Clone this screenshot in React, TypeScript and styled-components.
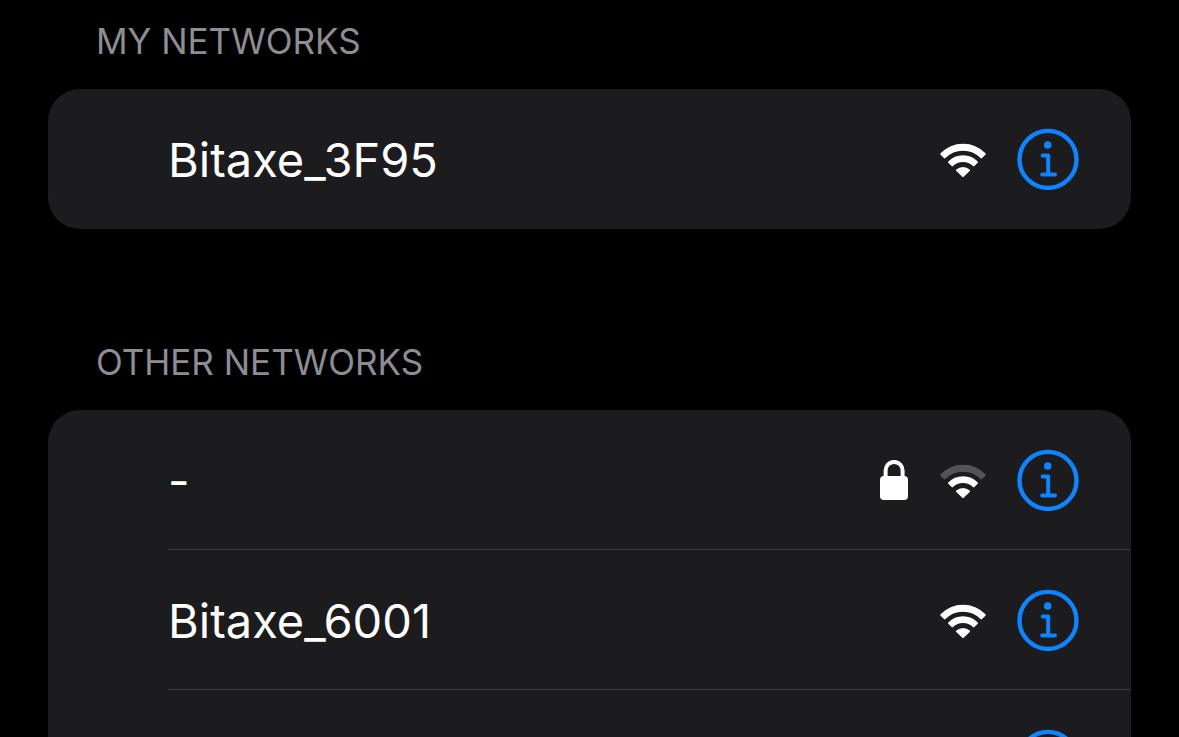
import React from 'react';
import styled, { createGlobalStyle } from 'styled-components';

const GlobalStyle = createGlobalStyle`
  * {
    box-sizing: border-box;
  }

  body {
    margin: 0;
    background: #000;
    color: #fff;
    font-family: Inter, Roboto, 'Liberation Sans', sans-serif;
  }
`;

const Screen = styled.main`
  display: flex;
  flex-direction: column;
  gap: 111px;
  height: 100vh;
  padding: 19px 48px 0;
  overflow: hidden;
`;

const Section = styled.section`
  flex: none;
`;

const SectionTitle = styled.h2`
  margin: 0;
  padding: 0 48px 26px;
  color: #8d8d93;
  font-size: 35px;
  font-weight: 400;
  line-height: 44px;
  text-transform: uppercase;
`;

const NetworkList = styled.ul`
  margin: 0;
  padding: 0 0 0 120px;
  list-style: none;
  background: #1c1c1e;
  border-radius: 32px;
`;

const NetworkRow = styled.li`
  display: flex;
  align-items: center;
  gap: 31px;
  height: 140px;
  padding-right: 52px;

  &:not(:last-child) {
    box-shadow: inset 0 -1px #3d3d41;
  }
`;

const NetworkButton = styled.button`
  display: flex;
  flex: 1;
  align-items: center;
  gap: 32px;
  height: 100%;
  min-width: 0;
  padding: 0;
  border: 0;
  background: none;
  color: inherit;
  font: inherit;
  text-align: left;
  cursor: pointer;
`;

const NetworkName = styled.span`
  flex: 1;
  padding-top: 2px;
  font-size: 47px;
  line-height: 60px;
`;

const InfoButton = styled.button`
  display: flex;
  padding: 0;
  border: 0;
  border-radius: 50%;
  background: none;
  color: #0f84fe;
  cursor: pointer;
`;

const Glyph = styled.svg`
  display: block;
  flex: none;
`;

const SignalBand = styled.path<{ $active: boolean }>`
  fill: ${({ $active }) => ($active ? '#fff' : '#545456')};
  stroke: ${({ $active }) => ($active ? '#fff' : '#545456')};
  stroke-width: 2px;
  stroke-linejoin: round;
`;

function WifiIcon({ strength }: { strength: number }) {
  return (
    <Glyph width="46" height="36" viewBox="0 -2 46 36" aria-hidden="true">
      <SignalBand
        $active={strength >= 3}
        d="M1.3 11A30 30 0 0 1 44.7 11L41.3 14.4A25.5 25.5 0 0 0 4.7 14.4Z"
      />
      <SignalBand
        $active={strength >= 2}
        d="M9 19.1A19.5 19.5 0 0 1 37 19.1L33.7 22.4A15.5 15.5 0 0 0 12.3 22.4Z"
      />
      <SignalBand
        $active={strength >= 1}
        d="M17 27.2A9 9 0 0 1 29 27.2L23 33Z"
      />
    </Glyph>
  );
}

function LockIcon() {
  return (
    <Glyph width="28" height="40" viewBox="0 0 28 40" aria-hidden="true">
      <rect y="16" width="28" height="24" rx="3.8" fill="#fff" />
      <path
        d="M5.6 18V10.4a8.5 8.5 0 0 1 17 0V18"
        fill="none"
        stroke="#fff"
        strokeWidth="4"
      />
    </Glyph>
  );
}

function InfoIcon() {
  return (
    <Glyph
      width="62"
      height="62"
      viewBox="0 0 62 62"
      fill="none"
      stroke="currentColor"
      aria-hidden="true"
    >
      <circle cx="31" cy="31.4" r="28.5" strokeWidth="4.4" />
      <circle cx="30.7" cy="17" r="3.8" fill="currentColor" stroke="none" />
      <path
        d="M25.7 27.4H31.2V46.4M25.2 46.4H38"
        strokeWidth="4"
        strokeLinecap="round"
        strokeLinejoin="round"
      />
    </Glyph>
  );
}

interface Network {
  id: string;
  name: string;
  strength: number;
  secured?: boolean;
}

const myNetworks: Network[] = [{ id: 'a', name: 'Bitaxe_3F95', strength: 3 }];

const otherNetworks: Network[] = [
  { id: 'b', name: '-', strength: 2, secured: true },
  { id: 'c', name: 'Bitaxe_6001', strength: 3 },
  { id: 'd', name: '', strength: 3 },
];

function NetworkSection({ title, networks }: { title: string; networks: Network[] }) {
  return (
    <Section>
      <SectionTitle>{title}</SectionTitle>
      <NetworkList>
        {networks.map(({ id, name, strength, secured }) => (
          <NetworkRow key={id}>
            <NetworkButton type="button" aria-label={name || 'Unnamed network'}>
              <NetworkName>{name}</NetworkName>
              {secured && <LockIcon />}
              <WifiIcon strength={strength} />
            </NetworkButton>
            <InfoButton type="button" aria-label="Network details">
              <InfoIcon />
            </InfoButton>
          </NetworkRow>
        ))}
      </NetworkList>
    </Section>
  );
}

export default function App() {
  return (
    <>
      <GlobalStyle />
      <Screen>
        <NetworkSection title="My Networks" networks={myNetworks} />
        <NetworkSection title="Other Networks" networks={otherNetworks} />
      </Screen>
    </>
  );
}
